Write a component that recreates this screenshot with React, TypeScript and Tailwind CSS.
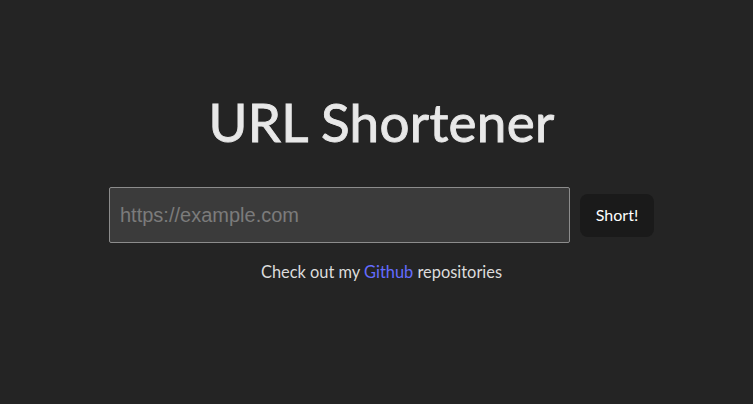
export default function App() {
  return (
    <div className="min-h-[404px] w-full bg-[#242424] font-['Lato',sans-serif] text-[rgba(255,255,255,0.87)]">
      <div className="flex flex-col items-center pl-[10px] pt-[94px]">
        <h1 className="text-[53px] leading-[56px] font-normal tracking-[0.3px] text-[#e8e8e8] [-webkit-text-stroke:0.9px_#e8e8e8]">URL Shortener</h1>
        <form className="mt-[37px] flex items-center gap-[10px]" onSubmit={(e) => e.preventDefault()}>
          <input
            type="text"
            placeholder="https://example.com"
            className="h-[56px] w-[461px] rounded-[2px] border border-[#8c8c8c] bg-[#3b3b3b] px-[10px] font-['Liberation_Sans',Arial,sans-serif] text-[20px] text-white placeholder:text-[#7b7b7b] outline-none"
          />
          <button
            type="submit"
            className="h-[43px] w-[74px] rounded-[8px] bg-[#1a1a1a] text-[16px] text-white"
          >
            Short!
          </button>
        </form>
        <p className="mt-[17px] text-[16.4px] leading-[24px] text-[#dcdcdc]">
          Check out my <a href="#" className="text-[#646cff]">Github</a> repositories
        </p>
      </div>
    </div>
  )
}
